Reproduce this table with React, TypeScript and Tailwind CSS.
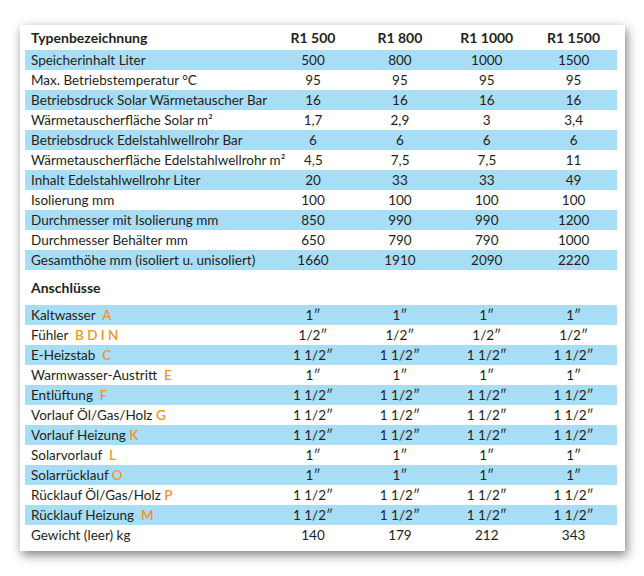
const specs: [string, string[], boolean][] = [
  ["Speicherinhalt Liter", ["500", "800", "1000", "1500"], true],
  ["Max. Betriebstemperatur °C", ["95", "95", "95", "95"], false],
  ["Betriebsdruck Solar Wärmetauscher Bar", ["16", "16", "16", "16"], true],
  ["Wärmetauscherfläche Solar m²", ["1,7", "2,9", "3", "3,4"], false],
  ["Betriebsdruck Edelstahlwellrohr Bar", ["6", "6", "6", "6"], true],
  ["Wärmetauscherfläche Edelstahlwellrohr m²", ["4,5", "7,5", "7,5", "11"], false],
  ["Inhalt Edelstahlwellrohr Liter", ["20", "33", "33", "49"], true],
  ["Isolierung mm", ["100", "100", "100", "100"], false],
  ["Durchmesser mit Isolierung mm", ["850", "990", "990", "1200"], true],
  ["Durchmesser Behälter mm", ["650", "790", "790", "1000"], false],
  ["Gesamthöhe mm (isoliert u. unisoliert)", ["1660", "1910", "2090", "2220"], true],
];

const one = "1\u2033";
const half = "1/2\u2033";
const oneHalf = "1 1/2\u2033";

// label, orange letters, values
const ports: [string, string, string[]][] = [
  ["Kaltwasser  ", "A", [one, one, one, one]],
  ["Fühler  ", "B D I N", [half, half, half, half]],
  ["E-Heizstab  ", "C", [oneHalf, oneHalf, oneHalf, oneHalf]],
  ["Warmwasser-Austritt  ", "E", [one, one, one, one]],
  ["Entlüftung  ", "F", [oneHalf, oneHalf, oneHalf, oneHalf]],
  ["Vorlauf Öl/Gas/Holz ", "G", [oneHalf, oneHalf, oneHalf, oneHalf]],
  ["Vorlauf Heizung ", "K", [oneHalf, oneHalf, oneHalf, oneHalf]],
  ["Solarvorlauf  ", "L", [one, one, one, one]],
  ["Solarrücklauf ", "O", [one, one, one, one]],
  ["Rücklauf Öl/Gas/Holz ", "P", [oneHalf, oneHalf, oneHalf, oneHalf]],
  ["Rücklauf Heizung  ", "M", [oneHalf, oneHalf, oneHalf, oneHalf]],
  ["Gewicht (leer) kg", "", ["140", "179", "212", "343"]],
];

function Row({
  label,
  values,
  blue,
}: {
  label: React.ReactNode;
  values: string[];
  blue: boolean;
}) {
  return (
    <div className={"flex h-[20px] items-center " + (blue ? "bg-[#a8ddf6]" : "")}>
      <div className="w-[245px] whitespace-pre pl-[6px]">{label}</div>
      {values.map((v, i) => (
        <div key={i} className="w-[87px] text-center">
          {v}
        </div>
      ))}
    </div>
  );
}

export default function App() {
  return (
    <div className="h-[576px] w-[644px] bg-white pl-[20px] pt-[25px] font-['Lato',sans-serif] text-[13.5px] text-[#231f20]">
      <div className="w-[605px] bg-white pb-[6px] pl-[5px] pr-[8px] shadow-[2px_4px_10px_rgba(0,0,0,0.5)]">
        <div className="flex h-[25px] items-center text-[14px] font-bold">
          <div className="w-[245px] pl-[6px]">Typenbezeichnung</div>
          <div className="w-[87px] text-center">R1 500</div>
          <div className="w-[87px] text-center">R1 800</div>
          <div className="w-[87px] text-center">R1 1000</div>
          <div className="w-[87px] text-center">R1 1500</div>
        </div>

        {specs.map(([label, values, blue]) => (
          <Row key={label} label={label} values={values} blue={blue} />
        ))}

        <div className="flex h-[35px] items-center pl-[6px] text-[14px] font-bold">Anschlüsse</div>

        {ports.map(([label, letters, values], i) => (
          <Row
            key={label}
            label={
              <>
                {label}
                <span className="font-semibold text-[#f7941d]">{letters}</span>
              </>
            }
            values={values}
            blue={i % 2 === 0}
          />
        ))}
      </div>
    </div>
  );
}
